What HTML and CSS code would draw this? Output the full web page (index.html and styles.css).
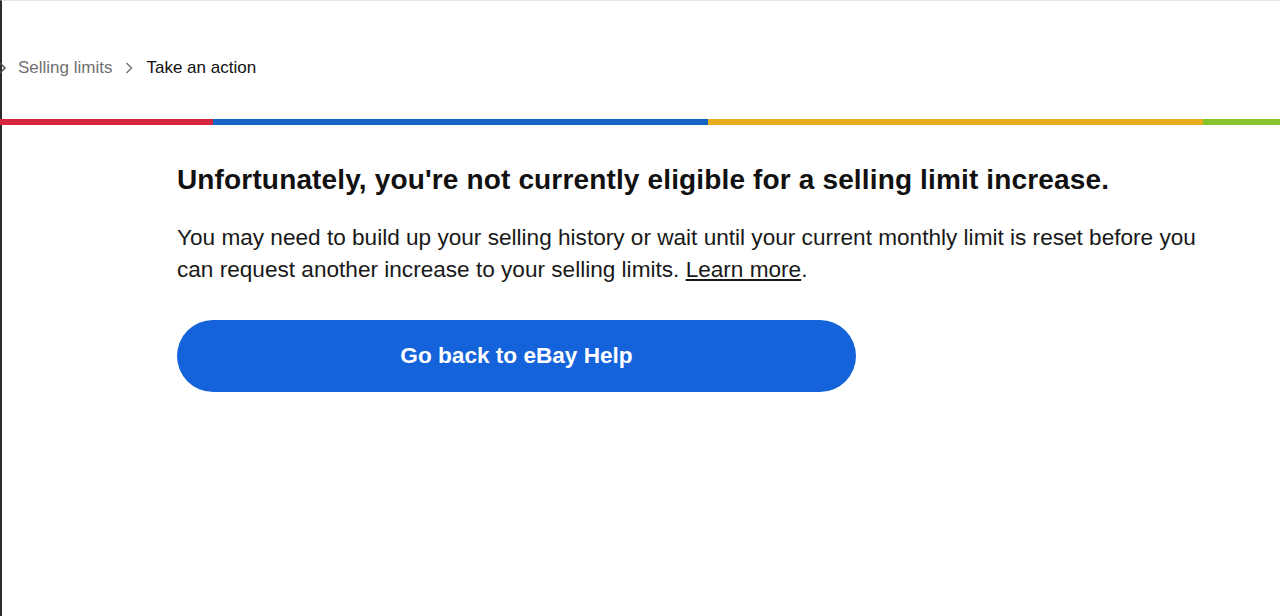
FILE: index.html
```html
<!DOCTYPE html>
<html lang="en">
	<head>
		<meta charset="UTF-8" />
		<meta name="viewport" content="width=device-width, initial-scale=1.0" />
		<title>Take an action</title>
		<link rel="stylesheet" href="styles.css">
	</head>
	<body>
		<div class="page">
			<nav class="breadcrumb">
				<span class="crumbSep crumbCut">
					<svg width="8" height="12" viewBox="0 0 8 12"><path d="M1 1l5 5-5 5" fill="none" stroke="#555" stroke-width="1.5"/></svg>
				</span>
				<a href="#" class="crumbLink">Selling limits</a>
				<span class="crumbSep">
					<svg width="8" height="12" viewBox="0 0 8 12"><path d="M1.5 1l5 5-5 5" fill="none" stroke="#707070" stroke-width="1.4"/></svg>
				</span>
				<span class="crumbCurrent">Take an action</span>
			</nav>

			<div class="colorBar">
				<div class="barRed"></div>
				<div class="barBlue"></div>
				<div class="barYellow"></div>
				<div class="barGreen"></div>
			</div>

			<div class="resultContent">
				<h1>Unfortunately, you're not currently eligible for a selling limit increase.</h1>
				<p>You may need to build up your selling history or wait until your current monthly limit is reset before you can request another increase to your selling limits. <a href="#">Learn more</a>.</p>
				<button class="primaryBtn">Go back to eBay Help</button>
			</div>
		</div>
	</body>
</html>
```

FILE: styles.css
```css
body {
	margin: 0;
	font-family: "Liberation Sans", Arial, sans-serif;
	color: #111;
	background: #fff;
}

.page {
	min-height: 615px;
	border-top: 1px solid #e5e5e5;
	border-left: 2px solid #2b2b2b;
}

.breadcrumb {
	display: flex;
	align-items: center;
	height: 20px;
	padding: 57px 0 0 0;
	font-size: 17px;
	position: relative;
}

.crumbCut {
	position: absolute;
	left: -16px;
	top: 61px;
}

.crumbLink {
	margin-left: 16px;
	color: #707070;
	text-decoration: none;
}

.crumbSep {
	display: flex;
	margin: 0 13px 0 13px;
}

.crumbCurrent {
	color: #111;
}

.colorBar {
	display: flex;
	height: 6px;
	margin-top: 41px;
	margin-left: -2px;
}

.barRed {
	width: 213px;
	background: #d8253f;
}

.barBlue {
	width: 495px;
	background: #1565c7;
}

.barYellow {
	width: 495px;
	background: #e8ac1c;
}

.barGreen {
	flex: 1;
	background: #86c32c;
}

.resultContent {
	padding: 37px 40px 0 175px;
}

.resultContent h1 {
	margin: 0;
	font-size: 28px;
	line-height: 36px;
	font-weight: bold;
	letter-spacing: 0.15px;
}

.resultContent p {
	max-width: 1040px;
	margin: 24px 0 0 0;
	font-size: 22.6px;
	line-height: 32px;
	color: #191919;
}

.resultContent p a {
	color: #191919;
}

.primaryBtn {
	margin-top: 34px;
	width: 679px;
	height: 72px;
	border: none;
	border-radius: 36px;
	background: #1463db;
	color: #fff;
	font-family: inherit;
	font-size: 22.6px;
	font-weight: bold;
	cursor: pointer;
}
```
